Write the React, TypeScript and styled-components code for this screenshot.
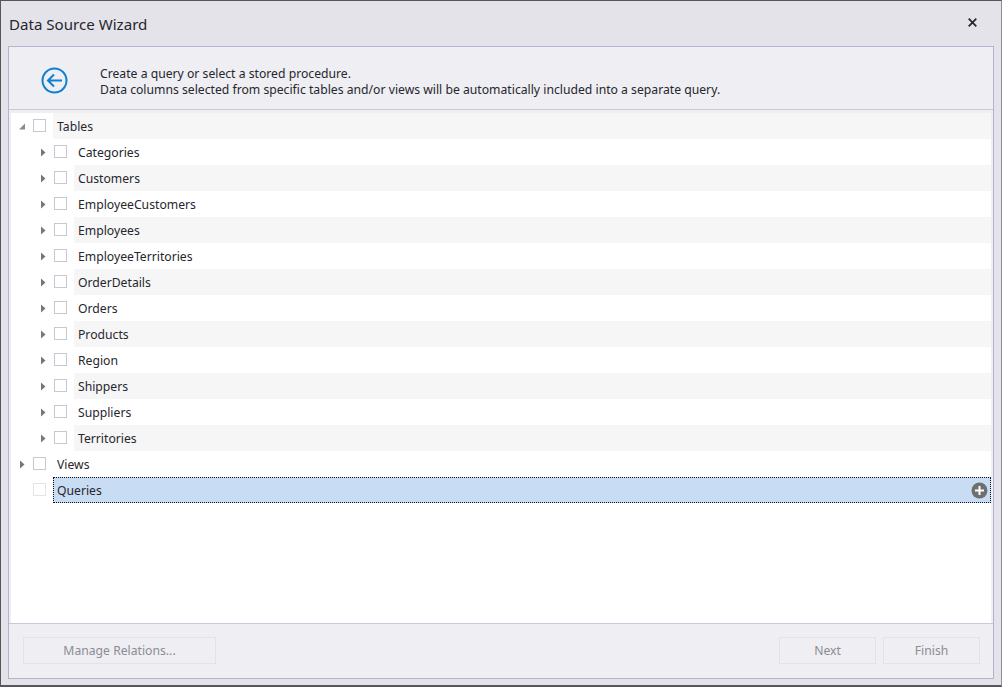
import React from "react";
import styled, { createGlobalStyle } from "styled-components";

const Global = createGlobalStyle`
  html, body { margin: 0; padding: 0; background: #e3e3e8; }
  body { font-family: "Noto Sans", "Open Sans", Arial, sans-serif; }
`;

const Window = styled.div`
  box-sizing: border-box;
  width: 1002px;
  height: 687px;
  background: #e3e3e9;
  border: 1px solid #56565c;
  border-right-color: #8e8e94;
  border-width: 1px 1px 2px 1px;
  display: flex;
  flex-direction: column;
  overflow: hidden;
`;

const TitleBar = styled.div`
  height: 45px;
  flex: none;
  display: flex;
  align-items: center;
  justify-content: space-between;
  padding: 0 24px 2px 8px;
  box-sizing: border-box;
`;

const Title = styled.div`
  font-size: 15.1px;
  color: #26262e;
  position: relative;
  top: 1px;
`;

const Close = styled.svg`
  width: 9px;
  height: 9px;
  display: block;
`;

const Panel = styled.div`
  flex: 1;
  margin: 0 7px 6px 7px;
  border: 1px solid #b3b4d0;
  background: #eeeef3;
  display: flex;
  flex-direction: column;
  min-height: 0;
`;

const Header = styled.div`
  height: 62px;
  flex: none;
  box-sizing: content-box;
  border-bottom: 1px solid #c8c9da;
  display: flex;
  align-items: center;
  padding-left: 32px;
  gap: 32px;
`;

const Back = styled.svg`
  width: 27px;
  height: 27px;
  flex: none;
  margin-top: 4px;
`;

const Info = styled.div`
  font-size: 12.2px;
  line-height: 16px;
  color: #26262e;
  margin-top: 8px;
`;

const Tree = styled.div`
  flex: 1;
  margin: 3px 2px 0 2px;
  background: #fff;
  min-height: 0;
`;

const Row = styled.div`
  height: 26px;
  display: flex;
  align-items: center;
`;

const Arrow = styled.svg<{ $indent: number }>`
  width: 6px;
  height: 9px;
  flex: none;
  margin-left: ${(p) => p.$indent}px;
`;

const Spacer = styled.div<{ $indent: number }>`
  width: 6px;
  flex: none;
  margin-left: ${(p) => p.$indent}px;
`;

const Check = styled.div<{ $faint?: boolean }>`
  box-sizing: border-box;
  width: 13px;
  height: 13px;
  flex: none;
  margin-left: 8px;
  margin-top: -2px;
  border: 1px solid ${(p) => (p.$faint ? "#e4e4e8" : "#c8c8d2")};
  background: #fff;
`;

const Label = styled.div<{ $shade?: boolean; $selected?: boolean }>`
  flex: 1;
  align-self: stretch;
  box-sizing: border-box;
  margin-left: 7px;
  padding-left: 4px;
  display: flex;
  align-items: center;
  justify-content: space-between;
  font-size: 12.2px;
  color: #26262e;
  background: ${(p) => (p.$selected ? "#c8dcf3" : p.$shade ? "#f6f6f6" : "#fff")};
  ${(p) => p.$selected && "outline: 1px dotted #111; outline-offset: -1px;"}
`;

const Plus = styled.svg`
  width: 17px;
  height: 17px;
  margin-right: 3px;
  flex: none;
`;

const Footer = styled.div`
  height: 55px;
  flex: none;
  border-top: 1px solid #c8c9da;
  display: flex;
  align-items: flex-start;
  padding: 13px 13px 0 14px;
  gap: 7px;
  box-sizing: border-box;
`;

const Button = styled.div<{ $w: number }>`
  box-sizing: border-box;
  width: ${(p) => p.$w}px;
  height: 27px;
  border: 1px solid #e2e3e8;
  display: flex;
  align-items: center;
  justify-content: center;
  font-size: 12.2px;
  color: #8c8c94;
`;

const Grow = styled.div`
  flex: 1;
`;

const Caret = ({ open, indent }: { open?: boolean; indent: number }) => (
  <Arrow $indent={indent} viewBox="0 0 6 9">
    {open ? (
      <polygon points="0,7.5 6,7.5 6,1.5" fill="#8a8a8a" />
    ) : (
      <polygon points="1,0.5 5.5,4.5 1,8.5" fill="#777" />
    )}
  </Arrow>
);

const tables = [
  "Categories",
  "Customers",
  "EmployeeCustomers",
  "Employees",
  "EmployeeTerritories",
  "OrderDetails",
  "Orders",
  "Products",
  "Region",
  "Shippers",
  "Suppliers",
  "Territories",
];

export default function App() {
  return (
    <Window>
      <Global />
      <TitleBar>
        <Title>Data Source Wizard</Title>
        <Close viewBox="0 0 9 9">
          <path d="M0.7 0.7 L8.3 8.3 M8.3 0.7 L0.7 8.3" stroke="#2a2a2e" strokeWidth="1.8" fill="none" />
        </Close>
      </TitleBar>
      <Panel>
        <Header>
          <Back viewBox="0 0 27 27">
            <circle cx="13.5" cy="13.5" r="12" fill="none" stroke="#0f7fd0" strokeWidth="2" />
            <path d="M21 13.5 H7 M13 7.5 L7 13.5 L13 19.5" fill="none" stroke="#0f7fd0" strokeWidth="2" />
          </Back>
          <Info>
            Create a query or select a stored procedure.
            <br />
            Data columns selected from specific tables and/or views will be automatically included into a separate query.
          </Info>
        </Header>
        <Tree>
          <Row>
            <Caret open indent={8} />
            <Check />
            <Label $shade>Tables</Label>
          </Row>
          {tables.map((t, i) => (
            <Row key={t}>
              <Caret indent={29} />
              <Check />
              <Label $shade={i % 2 === 1}>{t}</Label>
            </Row>
          ))}
          <Row>
            <Caret indent={8} />
            <Check />
            <Label>Views</Label>
          </Row>
          <Row>
            <Spacer $indent={8} />
            <Check $faint />
            <Label $selected>
              Queries
              <Plus viewBox="0 0 17 17">
                <circle cx="8.5" cy="8.5" r="8" fill="#6f6f6f" />
                <path d="M8.5 4 V13 M4 8.5 H13" stroke="#fff" strokeWidth="2" />
              </Plus>
            </Label>
          </Row>
        </Tree>
        <Footer>
          <Button $w={193}>Manage Relations...</Button>
          <Grow />
          <Button $w={97}>Next</Button>
          <Button $w={97}>Finish</Button>
        </Footer>
      </Panel>
    </Window>
  );
}
